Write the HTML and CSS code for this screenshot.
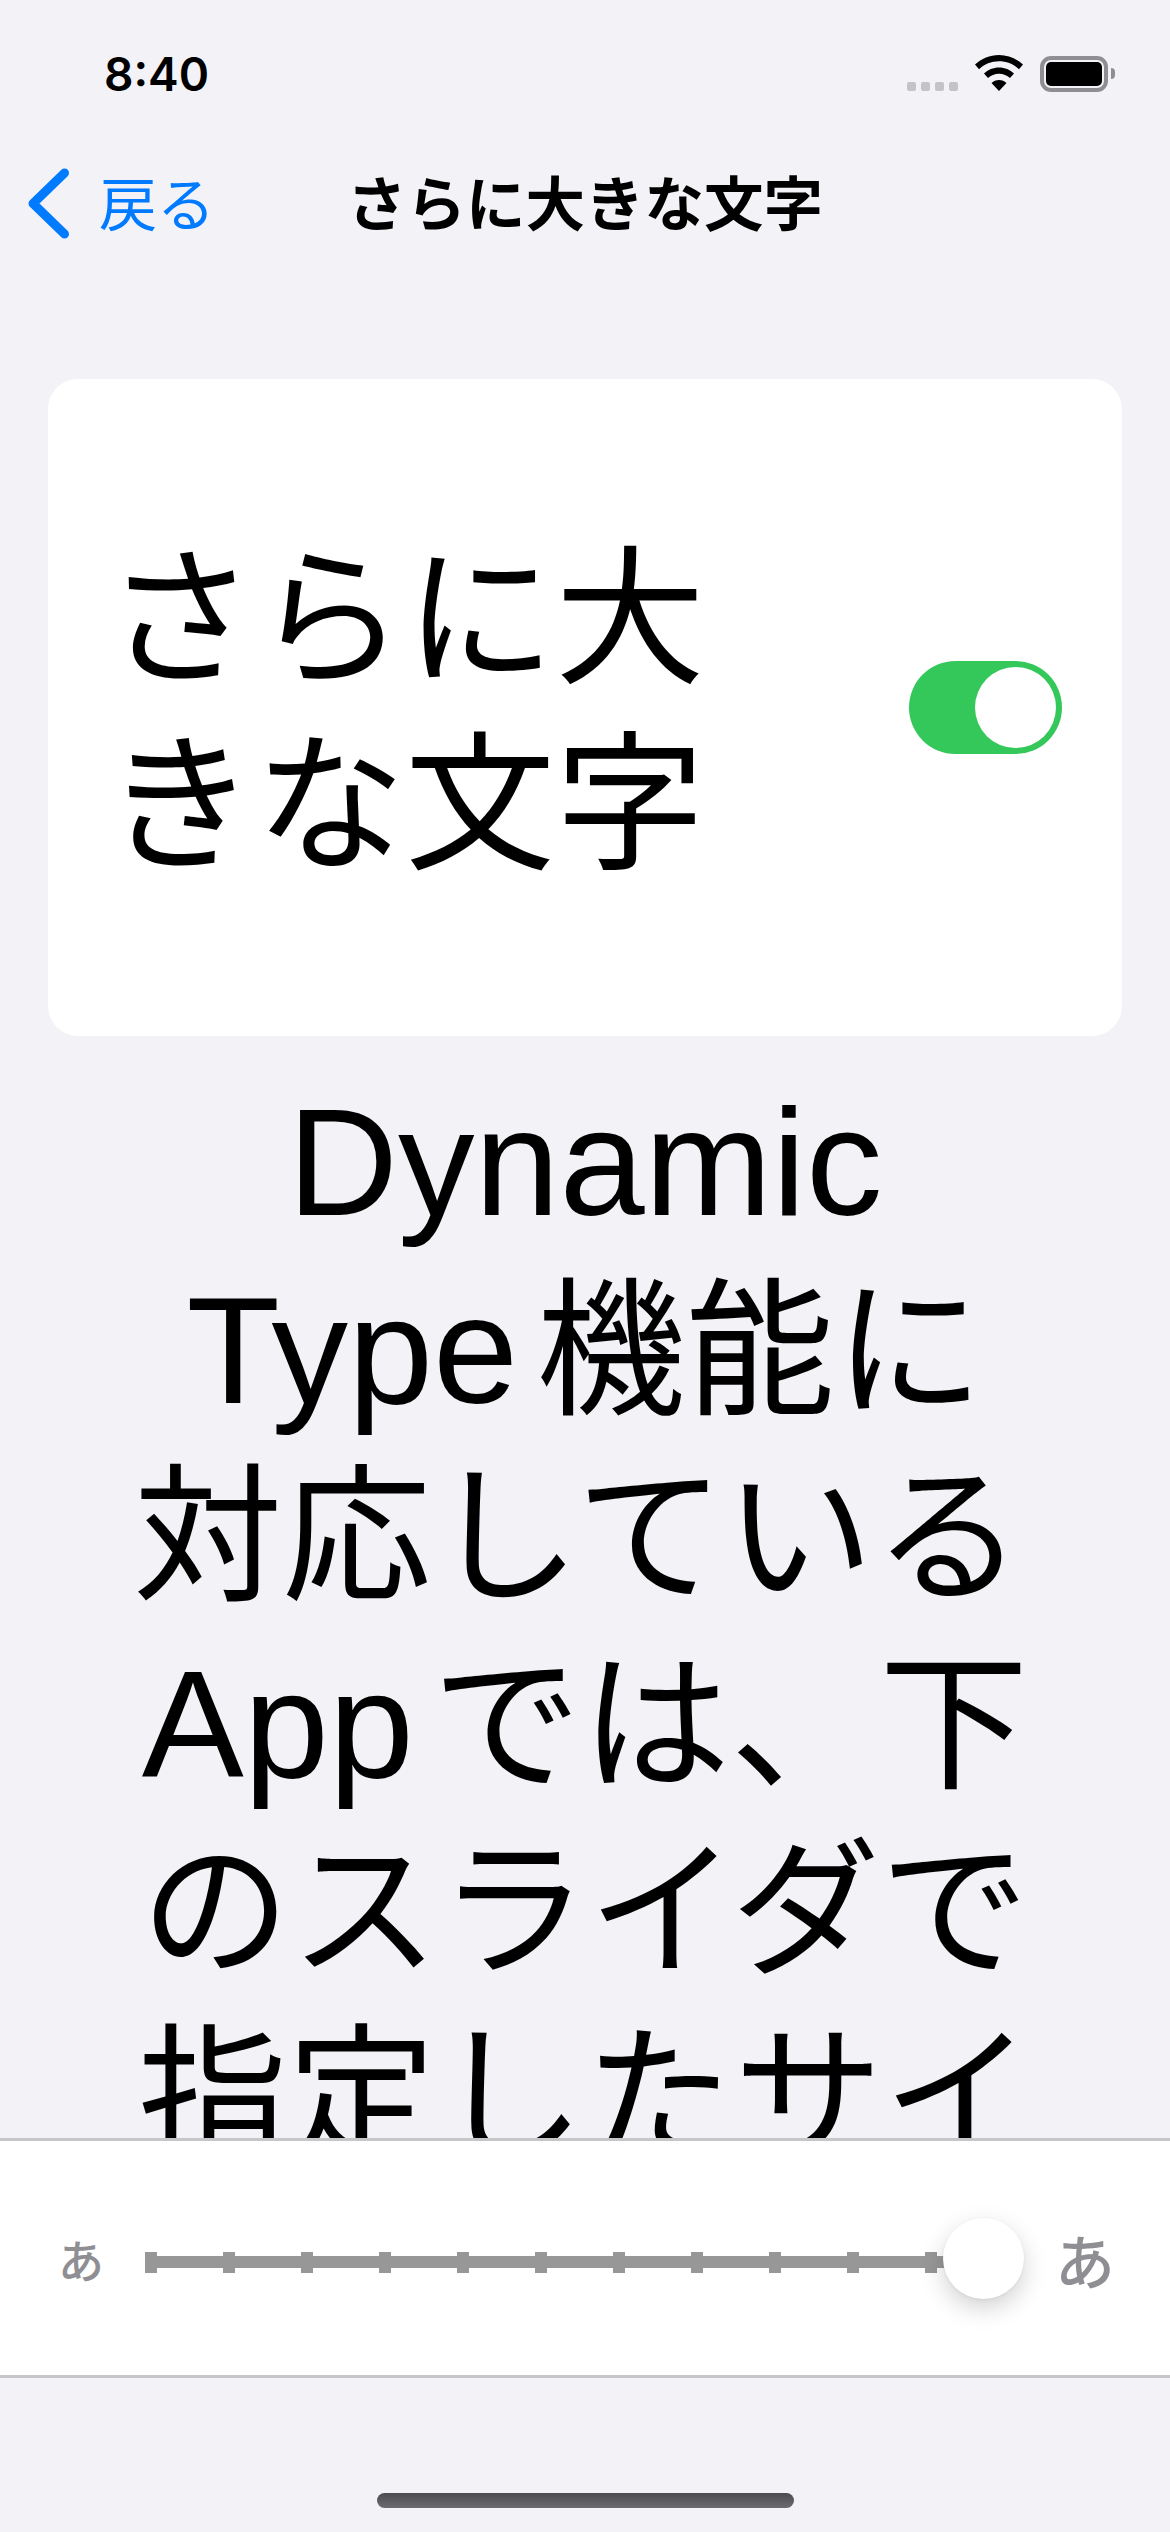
FILE: index.html
```html
<!DOCTYPE html>
<html lang="ja">
<head>
  <meta charset="UTF-8" />
  <meta name="viewport" content="width=device-width, initial-scale=1.0"/>
  <title>さらに大きな文字</title>
  <link rel="stylesheet" href="styles.css">
</head>
<body>
  <div class="screen">
    <div class="status-bar">
      <span class="time">8:40</span>
      <div class="status-icons">
        <div class="signal"><i></i><i></i><i></i><i></i></div>
        <svg class="wifi" width="48" height="36" viewBox="0 0 48 36">
          <path d="M24 0C14.800 0 6.400 3.600 0 9.500l4 4.700C9.300 9.300 16.300 6.300 24 6.300s14.700 3 20 7.900l4-4.700C41.600 3.600 33.200 0 24 0z"/>
          <path d="M24 12.500c-5.800 0-11.100 2.300-15 6l4 4.600c2.900-2.700 6.800-4.400 11-4.400s8.100 1.700 11 4.400l4-4.600c-3.900-3.700-9.200-6-15-6z"/>
          <path d="M24 25c-2.900 0-5.500 1.100-7.500 3L24 36l7.500-8c-2-1.900-4.600-3-7.500-3z"/>
        </svg>
        <div class="battery"><div class="battery-level"></div></div>
      </div>
    </div>

    <div class="nav-bar">
      <a class="back">
        <svg class="chevron" width="42" height="71" viewBox="0 0 42 71">
          <path d="M36.500 5L5 35.500 36.500 66" fill="none" stroke="#007aff" stroke-width="9" stroke-linecap="round" stroke-linejoin="round"/>
        </svg>
        <span class="back-label">戻る</span>
      </a>
      <h1>さらに大きな文字</h1>
    </div>

    <main class="content">
      <div class="card">
        <div class="card-label">さらに大<br>きな文字</div>
        <div class="toggle"><div class="knob"></div></div>
      </div>
      <p class="description"><span class="latin">Dynamic</span><br><span class="latin">Type</span> 機能に<br><span class="shift">対応している</span><br><span class="latin">App</span> では、下<br>のスライダで<br>指定したサイ</p>
    </main>

    <div class="slider-panel">
      <span class="small-a">あ</span>
      <div class="slider">
        <div class="track"></div>
        <div class="ticks">
          <i></i><i></i><i></i><i></i><i></i><i></i><i></i><i></i><i></i><i></i><i></i>
        </div>
        <div class="thumb"></div>
      </div>
      <span class="large-a">あ</span>
    </div>

    <div class="home-area"><div class="home-bar"></div></div>
  </div>
</body>
</html>
```

FILE: styles.css
```css
* {
  box-sizing: border-box;
}

body {
  margin: 0;
  background: #f2f2f7;
  font-family: "Liberation Sans", "Noto Sans CJK JP", sans-serif;
  color: #000;
}

.screen {
  width: 1170px;
  height: 2532px;
  display: flex;
  flex-direction: column;
  overflow: hidden;
}

.status-bar {
  height: 132px;
  flex: none;
  display: flex;
  justify-content: space-between;
  align-items: flex-start;
  padding: 47px 62px 0 104px;
}

.time {
  font-family: Inter, sans-serif;
  font-size: 46px;
  font-weight: 600;
  line-height: 54px;
}

.status-icons {
  display: flex;
  align-items: flex-start;
  padding-top: 8px;
}

.signal {
  display: flex;
  gap: 5px;
  margin-top: 27px;
  margin-right: 17px;
}

.signal i {
  width: 9px;
  height: 9px;
  border-radius: 2px;
  background: #c4c4c6;
}

.wifi {
  margin-right: 17px;
}

.battery {
  position: relative;
  width: 68px;
  height: 36px;
  margin-top: 1px;
  border: 4px solid #8e8e93;
  border-radius: 11px;
  padding: 2px;
}

.battery::after {
  content: "";
  position: absolute;
  right: -11px;
  top: 8px;
  width: 4px;
  height: 11px;
  border-radius: 0 4px 4px 0;
  background: #8e8e93;
}

.battery-level {
  height: 100%;
  background: #000;
  border-radius: 5px;
}

.nav-bar {
  height: 142px;
  flex: none;
  display: grid;
  grid-template-columns: 1fr auto 1fr;
  align-items: center;
}

.back {
  display: flex;
  align-items: center;
  gap: 29px;
  margin-left: 28px;
  color: #007aff;
  font-size: 58px;
  line-height: 1;
}

.back-label {
  padding-top: 6px;
}

.nav-bar h1 {
  margin: 0;
  padding-top: 6px;
  font-size: 59.5px;
  font-weight: 700;
  line-height: 1;
}

.content {
  flex: 1;
  min-height: 0;
  overflow: hidden;
  padding: 105px 48px 0;
}

.card {
  height: 657px;
  display: flex;
  justify-content: space-between;
  align-items: center;
  padding: 0 60px 0 57px;
  background: #fff;
  border-radius: 30px;
}

.card-label {
  margin-top: 10px;
  font-size: 150px;
  line-height: 186px;
}

.toggle {
  width: 153px;
  height: 93px;
  padding: 6px;
  display: flex;
  justify-content: flex-end;
  background: #34c759;
  border-radius: 47px;
}

.knob {
  width: 81px;
  height: 81px;
  background: #fff;
  border-radius: 50%;
}

.description {
  margin: 33px -20px 0;
  text-align: center;
  font-size: 149px;
  line-height: 186px;
  word-spacing: -23px;
}

.latin {
  font-size: 153px;
}

.shift {
  margin-left: -14px;
}

.slider-panel {
  height: 240px;
  flex: none;
  display: flex;
  align-items: center;
  background: #fff;
  border-top: 3px solid #c6c6c8;
  border-bottom: 3px solid #c6c6c8;
}

.small-a {
  width: 145px;
  padding-left: 58px;
  font-size: 46px;
  font-weight: 500;
  color: #8e8e93;
}

.large-a {
  margin-left: 31px;
  font-size: 60px;
  font-weight: 500;
  color: #8e8e93;
}

.slider {
  position: relative;
  width: 879px;
  height: 81px;
}

.track {
  position: absolute;
  left: 0;
  right: 40px;
  top: 38px;
  height: 12px;
  background: #979797;
}

.ticks {
  position: absolute;
  left: 0;
  top: 34px;
  width: 792px;
  display: flex;
  justify-content: space-between;
}

.ticks i {
  width: 12px;
  height: 21px;
  background: #979797;
}

.thumb {
  position: absolute;
  right: 0;
  top: 0;
  width: 81px;
  height: 81px;
  background: #fff;
  border-radius: 50%;
  box-shadow: 0 9px 24px rgba(0, 0, 0, 0.18), 0 1px 3px rgba(0, 0, 0, 0.06);
}

.home-area {
  height: 154px;
  flex: none;
  padding-top: 115px;
  display: flex;
  justify-content: center;
}

.home-bar {
  width: 417px;
  height: 15px;
  background: linear-gradient(#4c4c50, #6c6c70);
  border-radius: 8px;
}
```
